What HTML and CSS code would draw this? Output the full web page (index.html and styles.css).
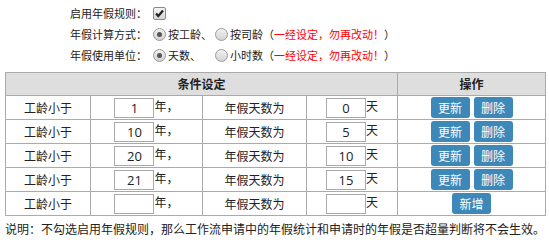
FILE: index.html
```html
<!DOCTYPE html>
<html>
<head>
<meta charset="utf-8">
<link rel="stylesheet" href="styles.css">
</head>
<body>
<div class="settings">
  <div class="row">
    <span class="label">启用年假规则：</span>
    <span class="check"><svg width="11" height="11" viewBox="0 0 11 11"><path d="M2 5.5 L4.3 8 L9 2.5" fill="none" stroke="#222" stroke-width="2.2"/></svg></span>
  </div>
  <div class="row">
    <span class="label">年假计算方式：</span>
    <span class="radio on"></span><span class="opt">按工龄、</span>
    <span class="radio"></span><span>按司龄</span><span class="note">（<em>一经设定，勿再改动！</em>）</span>
  </div>
  <div class="row">
    <span class="label">年假使用单位：</span>
    <span class="radio on"></span><span class="opt">天数、</span>
    <span class="radio"></span><span>小时数</span><span class="note">（<em>一经设定，勿再改动！</em>）</span>
  </div>
</div>
<table class="grid">
  <colgroup><col class="c1"><col class="c2"><col class="c3"><col class="c4"><col class="c5"></colgroup>
  <thead>
    <tr><th colspan="4">条件设定</th><th>操作</th></tr>
  </thead>
  <tbody>
    <tr><td>工龄小于</td><td><span class="box">1</span>年，</td><td>年假天数为</td><td><span class="box">0</span>天</td><td><span class="btn">更新</span><span class="btn">删除</span></td></tr>
    <tr><td>工龄小于</td><td><span class="box">10</span>年，</td><td>年假天数为</td><td><span class="box">5</span>天</td><td><span class="btn">更新</span><span class="btn">删除</span></td></tr>
    <tr><td>工龄小于</td><td><span class="box">20</span>年，</td><td>年假天数为</td><td><span class="box">10</span>天</td><td><span class="btn">更新</span><span class="btn">删除</span></td></tr>
    <tr><td>工龄小于</td><td><span class="box">21</span>年，</td><td>年假天数为</td><td><span class="box">15</span>天</td><td><span class="btn">更新</span><span class="btn">删除</span></td></tr>
    <tr><td>工龄小于</td><td><span class="box"></span>年，</td><td>年假天数为</td><td><span class="box"></span>天</td><td><span class="btn">新增</span></td></tr>
  </tbody>
</table>
<p class="desc">说明：不勾选启用年假规则，那么工作流申请中的年假统计和申请时的年假是否超量判断将不会生效。</p>
</body>
</html>
```

FILE: styles.css
```css
html, body {
  margin: 0;
  padding: 0;
  background: #fff;
}
body {
  font-family: "Noto Sans CJK SC", "Noto Sans", sans-serif;
  color: #222;
  font-size: 12px;
}
.settings {
  padding: 3px 0 0 70px;
  font-size: 11px;
  height: 72px;
  box-sizing: border-box;
}
.row {
  display: flex;
  align-items: center;
  height: 21px;
  line-height: 21px;
}
.label {
  width: 81px;
}
.check {
  width: 13px;
  height: 13px;
  box-sizing: border-box;
  border: 1px solid #8a8a8a;
  border-radius: 2px;
  background: linear-gradient(#f4f4f4, #d6d6d6);
  margin: 0 3px 0 2px;
  display: flex;
  align-items: center;
  justify-content: center;
}
.check svg { display: block; }
.radio {
  width: 13px;
  height: 13px;
  box-sizing: border-box;
  border: 1px solid #9a9a9a;
  border-radius: 50%;
  background: linear-gradient(#f2f2f2, #d2d2d2);
  margin: 0 2px 0 2px;
  display: flex;
  align-items: center;
  justify-content: center;
}
.radio.on::after {
  content: "";
  width: 5px;
  height: 5px;
  border-radius: 50%;
  background: #555;
}
.opt {
  width: 45px;
}
.note em {
  font-style: normal;
  color: #f00;
}
.grid {
  border-collapse: collapse;
  margin-left: 5px;
  width: 540px;
  table-layout: fixed;
}
.c1 { width: 85px; }
.c2 { width: 112px; }
.c3 { width: 104px; }
.c4 { width: 91px; }
.c5 { width: 148px; }
.grid th, .grid td {
  border: 1px solid #aaa;
  padding: 0;
  text-align: center;
  line-height: 16px;
}
.grid th {
  background: #dedede;
  font-weight: bold;
  height: 22px;
  color: #222;
}
.grid td {
  height: 23px;
}
.box {
  display: inline-block;
  vertical-align: middle;
  width: 40px;
  height: 20px;
  box-sizing: border-box;
  border: 1px solid #a9a9a9;
  line-height: 18px;
  font-size: 13px;
  text-align: center;
  font-family: "Open Sans", "Noto Sans", sans-serif;
}
.btn {
  display: inline-block;
  vertical-align: middle;
  width: 39px;
  height: 21px;
  line-height: 21px;
  background: #3d88b9;
  color: #fff;
  border-radius: 3px;
  margin: 0 2px;
}
.desc {
  margin: 3px 0 0 5px;
  line-height: 20px;
  white-space: nowrap;
}
```
